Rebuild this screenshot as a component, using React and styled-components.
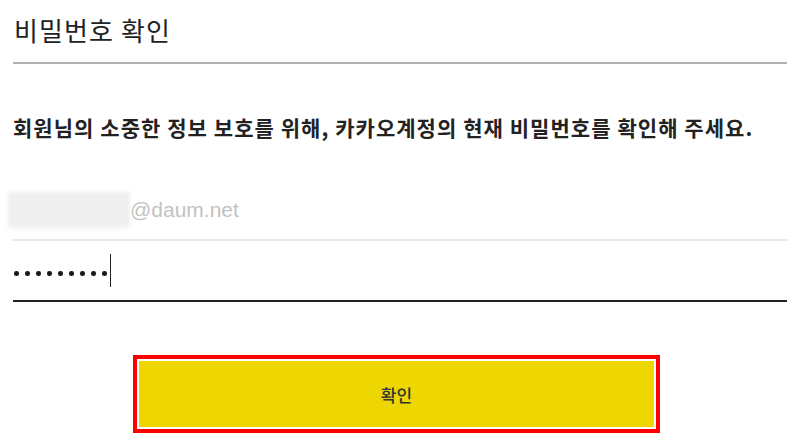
import React from "react";
import styled, { createGlobalStyle } from "styled-components";

const GlobalStyle = createGlobalStyle`
  body {
    margin: 0;
    background: #fff;
    font-family: "Noto Sans CJK KR", "Noto Sans", sans-serif;
    color: #222;
  }
`;

const App = () => {
    const dots = Array.from({ length: 9 });

    return (
        <>
            <GlobalStyle />
            <Wrap>
                <Header>
                    <Title>비밀번호 확인</Title>
                </Header>
                <Desc>회원님의 소중한 정보 보호를 위해, 카카오계정의 현재 비밀번호를 확인해 주세요.</Desc>
                <Field>
                    <Blur />
                    <Domain>@daum.net</Domain>
                </Field>
                <Field $active>
                    <Dots>
                        {dots.map((_, i) => (
                            <Dot key={i} />
                        ))}
                    </Dots>
                    <Caret />
                </Field>
                <Button type="button">확인</Button>
            </Wrap>
        </>
    );
};

const Wrap = styled.div`
    padding: 0 13px 12px;
    display: flex;
    flex-direction: column;
`;

const Header = styled.div`
    padding: 10px 0 12px;
    border-bottom: 2px solid #b0b0b0;
`;

const Title = styled.h1`
    margin: 0;
    padding-left: 1px;
    font-size: 26px;
    font-weight: 400;
    letter-spacing: 1.1px;
    line-height: 40px;
    color: #222;
`;

const Desc = styled.p`
    margin: 48px 0 0;
    font-size: 21px;
    font-weight: 700;
    letter-spacing: 1.05px;
    line-height: 30px;
    color: #222;
    white-space: nowrap;
`;

const Field = styled.div`
    margin-top: ${(p) => (p.$active ? "0" : "39px")};
    height: ${(p) => (p.$active ? "59px" : "58px")};
    display: flex;
    align-items: center;
    border-bottom: 2px solid ${(p) => (p.$active ? "#222" : "#e8e8e8")};
`;

const Blur = styled.span`
    margin-left: -5px;
    width: 122px;
    height: 36px;
    background: #efefef;
    filter: blur(2px);
`;

const Domain = styled.span`
    font-family: "Liberation Sans", Arial, sans-serif;
    font-size: 21px;
    color: #c2c2c2;
`;

const Dots = styled.span`
    display: flex;
    gap: 6.5px;
    margin-top: 6px;
    margin-left: 1px;
`;

const Dot = styled.span`
    width: 4.5px;
    height: 4.5px;
    border-radius: 50%;
    background: #1a1a1a;
`;

const Caret = styled.span`
    width: 1.5px;
    height: 33px;
    margin-left: 3px;
    background: #222;
`;

const Button = styled.button`
    margin: 59px 0 0 126px;
    width: 515px;
    height: 66px;
    border: none;
    background: #eed600;
    outline: 4px solid #ff0000;
    outline-offset: 2px;
    font-family: "Noto Sans CJK KR", sans-serif;
    font-size: 17px;
    font-weight: 500;
    color: #333;
    cursor: pointer;
`;

export default App;
